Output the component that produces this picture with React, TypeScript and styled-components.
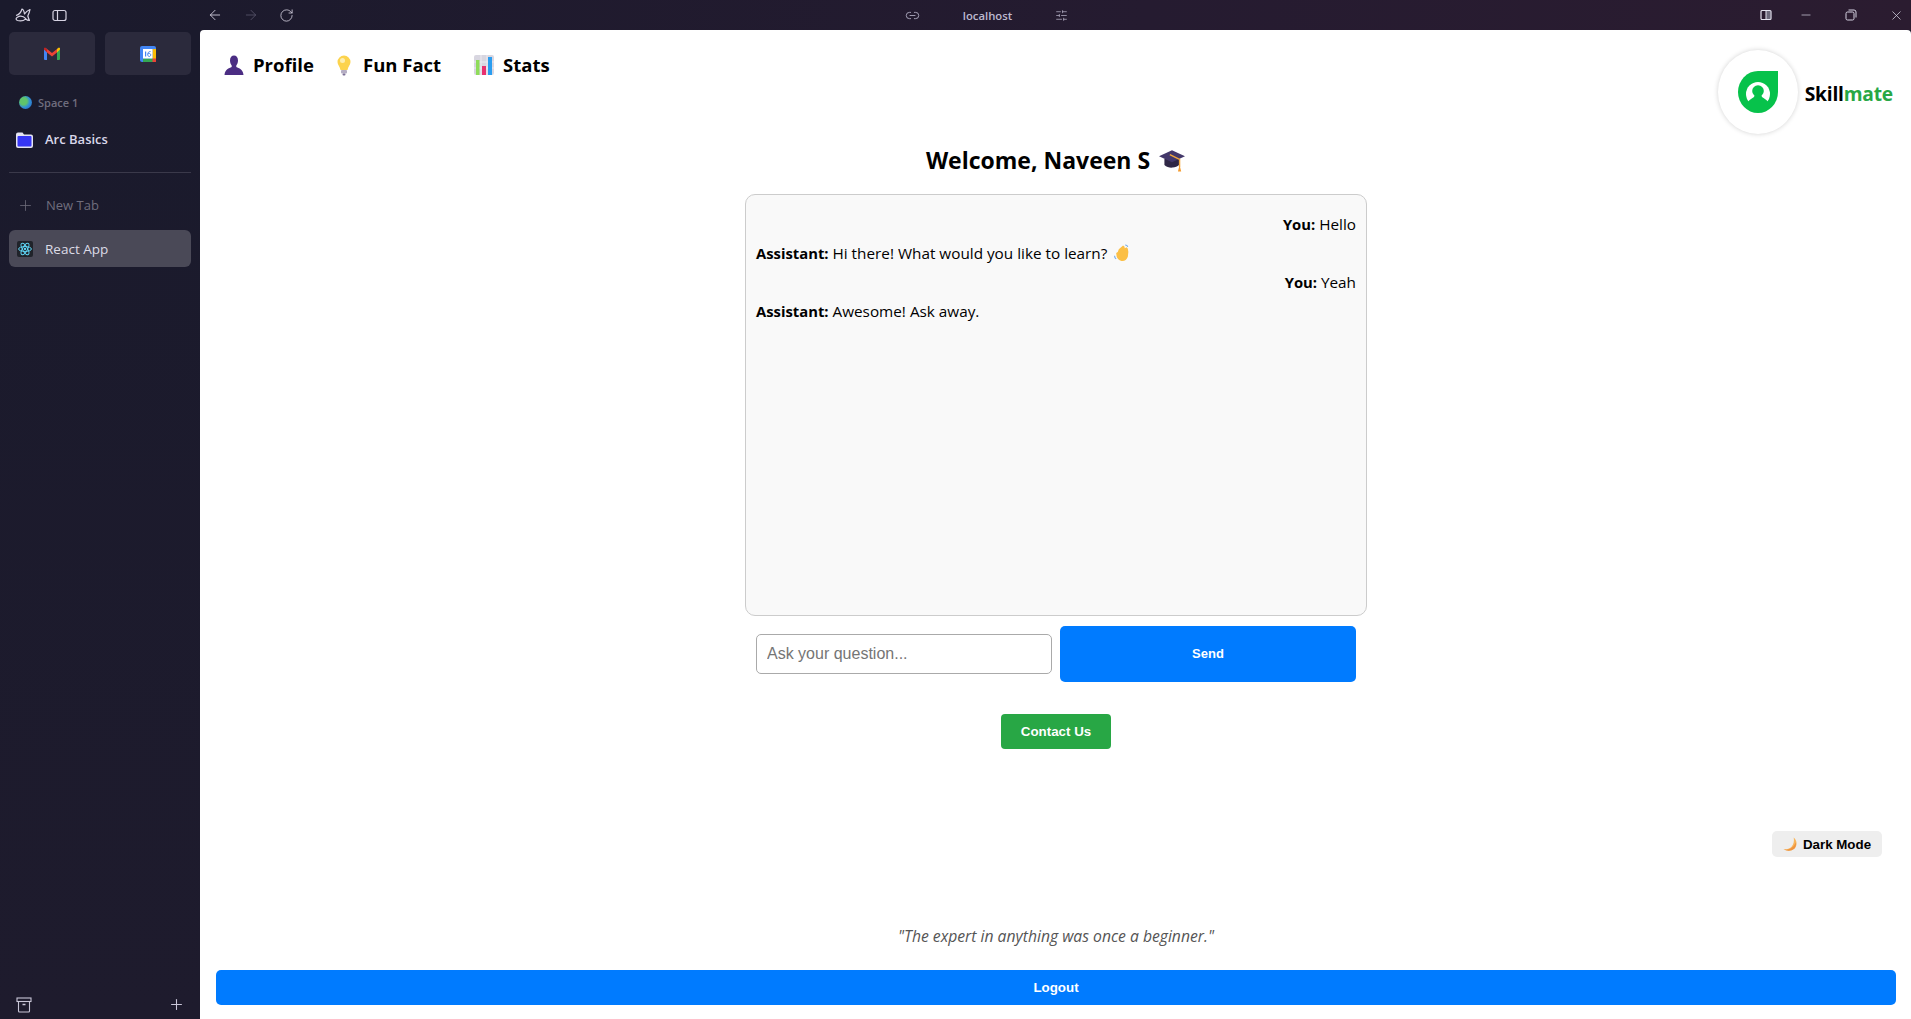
import React from 'react';
import styled, { createGlobalStyle } from 'styled-components';
import { ArrowLeft, ArrowRight, RotateCw, Link2, SlidersHorizontal, Minus, X, Plus } from 'lucide-react';

const UI_FONT = `"Open Sans", "Noto Sans", sans-serif`;

const GlobalStyle = createGlobalStyle`
  html, body {
    margin: 0;
    height: 100%;
    overflow: hidden;
    background: #1b1a2c;
  }
  * {
    box-sizing: border-box;
  }
`;

const Shell = styled.div`
  display: flex;
  flex-direction: column;
  width: 1911px;
  height: 1019px;
`;

const TitleBar = styled.header`
  display: grid;
  grid-template-columns: 1fr auto 1fr;
  align-items: center;
  height: 30px;
  padding: 0 0 0 14px;
  background: linear-gradient(90deg, #1a1a2c 0%, #251b30 60%, #2b1c30 100%);
  color: #d6d3e2;
`;

const BarLeft = styled.div`
  display: flex;
  align-items: center;
`;

const BarIcon = styled.span<{ $dim?: boolean; $gap?: number }>`
  display: flex;
  margin-right: ${(p) => p.$gap ?? 0}px;
  color: ${(p) => (p.$dim ? '#57536a' : '#d6d3e2')};
`;

const Address = styled.div`
  display: flex;
  align-items: center;
  gap: 43px;
  padding-left: 48px;
  font: 600 11.3px ${UI_FONT};
  color: #bdb9cf;
`;

const BarRight = styled.div`
  display: flex;
  align-items: center;
  justify-content: flex-end;
  padding-right: 7px;
`;

const Body = styled.div`
  display: flex;
  flex: 1;
  min-height: 0;
`;

const Sidebar = styled.aside`
  display: flex;
  flex-direction: column;
  width: 200px;
  padding: 2px 9px 0;
  background: linear-gradient(180deg, #1a1a2c 0%, #1e1b2d 100%);
  font-family: ${UI_FONT};
`;

const Pins = styled.div`
  display: grid;
  grid-template-columns: 86px 86px;
  gap: 10px;
`;

const Pin = styled.div`
  display: flex;
  align-items: center;
  justify-content: center;
  height: 43px;
  border-radius: 5px;
  background: #2b2a3c;
`;

const SpaceLabel = styled.div`
  display: flex;
  align-items: center;
  gap: 6px;
  margin: 19px 0 0 10px;
  height: 16px;
  font-size: 11px;
  font-weight: 600;
  color: #6f6d7e;
`;

const Globe = styled.span`
  width: 13px;
  height: 13px;
  border-radius: 50%;
  background: radial-gradient(circle at 35% 40%, #5fc46b 0 30%, #2f8fd8 55%, #2e5fb8 100%);
`;

const FolderRow = styled.div`
  display: flex;
  align-items: center;
  gap: 12px;
  height: 20px;
  margin: 19px 0 0 7px;
  font-size: 13px;
  font-weight: 600;
  color: #d9d7ea;
`;

const Divider = styled.hr`
  width: 100%;
  height: 1px;
  margin: 23px 0 0;
  border: 0;
  background: #3a394a;
`;

const NewTab = styled.div`
  display: flex;
  align-items: center;
  gap: 12px;
  height: 20px;
  margin: 22px 0 0 8px;
  font-size: 13px;
  color: #6f6d7c;
`;

const ActiveTab = styled.div`
  display: flex;
  align-items: center;
  gap: 12px;
  height: 37px;
  margin-top: 15px;
  padding-left: 8px;
  border-radius: 6px;
  background: #4a4957;
  font-size: 13.5px;
  color: #dcdbe6;
`;

const ReactBadge = styled.span`
  display: flex;
  align-items: center;
  justify-content: center;
  width: 16px;
  height: 16px;
  border-radius: 2px;
  background: #20232a;
`;

const SidebarFoot = styled.div`
  display: flex;
  align-items: center;
  justify-content: space-between;
  margin-top: auto;
  padding: 0 6px 6px 7px;
  color: #c9c6d8;
`;

const Main = styled.main`
  display: flex;
  flex: 1;
  flex-direction: column;
  align-items: center;
  min-width: 0;
  padding: 15px 15px 14px 16px;
  border-radius: 4px 4px 0 0;
  background: #fff;
  font-family: ${UI_FONT};
  color: #000;
`;

const TopRow = styled.div`
  display: flex;
  align-items: flex-start;
  justify-content: space-between;
  width: 100%;
  height: 89px;
`;

const Nav = styled.nav`
  display: flex;
  align-items: center;
  padding: 6px 0 0 8px;
`;

const NavItem = styled.a<{ $width: number }>`
  display: flex;
  align-items: center;
  gap: 9px;
  width: ${(p) => p.$width}px;
  font-size: 18.5px;
  font-weight: 700;
  line-height: 28px;
`;

const Brand = styled.div`
  display: flex;
  align-items: center;
  gap: 7px;
  margin: 5px 3px 0 0;
`;

const LogoCircle = styled.div`
  display: flex;
  align-items: center;
  justify-content: center;
  width: 80px;
  height: 84px;
  border-radius: 50%;
  background: #fff;
  box-shadow: 0 0 5px rgba(0, 0, 0, 0.18);
`;

const BrandName = styled.span`
  padding-top: 3px;
  font-size: 19.2px;
  font-weight: 700;
  letter-spacing: -0.2px;
`;

const BrandAccent = styled.span`
  color: #28a745;
`;

const Heading = styled.h2`
  display: flex;
  align-items: center;
  gap: 9px;
  margin: 10px 0 0;
  padding-right: 1px;
  font-size: 23px;
  font-weight: 700;
  line-height: 32px;
`;

const Panel = styled.section`
  display: flex;
  flex-direction: column;
  width: 622px;
  height: 422px;
  margin-top: 18px;
  padding: 15px 10px;
  border: 1px solid #ccc;
  border-radius: 10px;
  background: #f9f9f9;
  font-size: 15.3px;
`;

const Message = styled.div<{ $mine?: boolean }>`
  height: 29px;
  line-height: 29px;
  text-align: ${(p) => (p.$mine ? 'right' : 'left')};

  b {
    font-size: 14.8px;
  }
  svg {
    margin-left: 2px;
    vertical-align: -3px;
  }
`;

const Composer = styled.form`
  display: grid;
  grid-template-columns: 1fr 1fr;
  align-items: center;
  gap: 8px;
  width: 600px;
  margin-top: 10px;
`;

const QuestionInput = styled.input`
  min-width: 0;
  height: 40px;
  padding: 0 10px;
  border: 1px solid #aaa;
  border-radius: 5px;
  font: 16px "Liberation Sans", Arial, sans-serif;
  &::placeholder {
    color: #757575;
  }
`;

const SendButton = styled.button`
  height: 56px;
  padding: 0 0 2px;
  border: 0;
  border-radius: 5px;
  background: #007bff;
  color: #fff;
  font: 700 13px "Liberation Sans", Arial, sans-serif;
`;

const ContactButton = styled.button`
  width: 110px;
  height: 35px;
  margin-top: 32px;
  border: 0;
  border-radius: 4px;
  background: #28a745;
  color: #fff;
  font: 700 13.33px "Liberation Sans", Arial, sans-serif;
`;

const DarkToggle = styled.button`
  display: flex;
  align-items: center;
  justify-content: center;
  gap: 5px;
  align-self: flex-end;
  width: 110px;
  height: 26px;
  margin: 82px 14px 0 0;
  border: 0;
  border-radius: 5px;
  background: #eee;
  color: #000;
  font: 700 13.33px "Liberation Sans", Arial, sans-serif;
`;

const Quote = styled.p`
  margin: auto 0 0;
  font-size: 15.7px;
  font-style: italic;
  color: #555;
`;

const LogoutButton = styled.button`
  flex: none;
  width: 100%;
  height: 35px;
  margin-top: 23px;
  border: 0;
  border-radius: 5px;
  background: #007bff;
  color: #fff;
  font: 700 13.33px "Liberation Sans", Arial, sans-serif;
`;

const ArcMark = () => (
  <svg width="18" height="16" viewBox="0 0 18 16" fill="none" stroke="#d6d3e2" strokeWidth="1.2" strokeLinejoin="round">
    <path d="M2 8.500c2.500-.6 5-3 6-6.500 1 .3 2 1.500 2.500 5 1-1.600 3-3.500 5.500-4.500-.4 2.600-1.500 5-2.200 6.500.4 1.500 1 3 1.600 4.500-1.800 0-3-.8-3.600-1.600-1.800 1.600-5 2.500-8.300 1.600-1.600-.5-1.900-2-.5-3 3-2 6.500-1.200 8.800 1.200" />
  </svg>
);

const PanelIcon = () => (
  <svg width="15" height="13" viewBox="0 0 15 13" fill="none" stroke="#d6d3e2" strokeWidth="1.2">
    <rect x="1" y="1.500" width="13" height="10" rx="2" />
    <path d="M5.500 1.500v10" />
  </svg>
);

const SplitIcon = () => (
  <svg width="12" height="12" viewBox="0 0 12 12">
    <rect x="6" y="2" width="4.500" height="8" fill="#6d6a7c" />
    <rect x="1" y="1.500" width="10" height="9" rx="1" fill="none" stroke="#e4e2ee" strokeWidth="1.200" />
    <path d="M6 1.500v9" stroke="#e4e2ee" strokeWidth="1" />
  </svg>
);

const RestoreIcon = () => (
  <svg width="12" height="12" viewBox="0 0 12 12" fill="none" stroke="#d6d3e2" strokeWidth="1">
    <rect x="1" y="3" width="8" height="8" rx="1.500" />
    <path d="M3.500 1h5.500a2 2 0 0 1 2 2v5.500" />
  </svg>
);

const GmailIcon = () => (
  <svg width="16" height="13" viewBox="0 0 16 13">
    <path d="M0 2.500 1.500 1 3 2v11H1a1 1 0 0 1-1-1z" fill="#4285f4" />
    <path d="M16 2.500 14.500 1 13 2v11h2a1 1 0 0 0 1-1z" fill="#34a853" />
    <path d="M3 2 8 6l5-4v3.500L8 9.500 3 5.500z" fill="#ea4335" />
    <path d="M0 2.500 3 5.500V2L1.800.900A1.100 1.100 0 0 0 0 2z" fill="#c5221f" />
    <path d="M13 2v3.500l3-3V2a1.100 1.100 0 0 0-1.800-1.100z" fill="#fbbc04" />
  </svg>
);

const CalendarIcon = () => (
  <svg width="16" height="16" viewBox="0 0 16 16">
    <rect width="16" height="16" rx="2" fill="#4285f4" />
    <rect x="12.500" y="3" width="3.500" height="10" fill="#fbbc04" />
    <rect x="3" y="12.500" width="10" height="3.500" fill="#34a853" />
    <rect x="12.500" y="12.500" width="3.500" height="3.500" fill="#ea4335" />
    <rect x="3" y="3" width="9.500" height="9.500" fill="#fff" />
    <rect x="5" y="5.500" width="1.200" height="5" fill="#4285f4" />
    <path d="M10.500 5.500c-2 0-2.800 1.400-2.800 3 0 1.200.7 2 1.500 2s1.500-.7 1.500-1.600-.7-1.400-1.500-1.400-1.300.4-1.500.8" fill="none" stroke="#4285f4" strokeWidth="1" />
  </svg>
);

const FolderIcon = () => (
  <svg width="17" height="17" viewBox="0 0 17 17">
    <path d="M2 1.500h4.500l1.500 2h7a2 2 0 0 1 2 2V15a2 2 0 0 1-2 2H2a2 2 0 0 1-2-2V3.500a2 2 0 0 1 2-2z" fill="#e5e4f2" />
    <rect x="1.500" y="5" width="14" height="10.500" rx="1" fill="#3636f5" />
  </svg>
);

const ReactIcon = () => (
  <svg width="14" height="14" viewBox="-12 -12 24 24" fill="none" stroke="#61dafb" strokeWidth="1.600">
    <circle r="2" fill="#61dafb" stroke="none" />
    <ellipse rx="11" ry="4.200" />
    <ellipse rx="11" ry="4.200" transform="rotate(60)" />
    <ellipse rx="11" ry="4.200" transform="rotate(120)" />
  </svg>
);

const ArchiveIcon = () => (
  <svg width="16" height="16" viewBox="0 0 16 16" fill="none" stroke="#c9c6d8" strokeWidth="1.100">
    <rect x="1" y="1" width="14" height="3.500" />
    <path d="M2.500 4.500V14a1 1 0 0 0 1 1h9a1 1 0 0 0 1-1V4.500" />
    <path d="M6.500 7.500h3" strokeWidth="1.500" />
  </svg>
);

const BustIcon = () => (
  <svg width="20" height="20" viewBox="0 0 20 20">
    <path d="M6 5.500C6 2 7.800.500 10 .500s4 1.500 4 5c0 2.300-.9 4-1.700 5v1.500c2.700 1 6.700 2.500 7.200 8H.500c.5-5.500 4.500-7 7.200-8v-1.500C6.900 9.500 6 7.800 6 5.500z" fill="#4b2d83" />
  </svg>
);

const BulbIcon = () => (
  <svg width="20" height="21" viewBox="0 0 20 21">
    <path d="M10 .500a6.500 6.500 0 0 0-6.500 6.500c0 3 2.500 4.500 3 8h7c.5-3.500 3-5 3-8A6.500 6.500 0 0 0 10 .500z" fill="#fcd34d" />
    <circle cx="8.500" cy="5.500" r="2.500" fill="#fdeeb0" />
    <rect x="7" y="15" width="6" height="3.500" rx="1" fill="#b5aec4" />
    <rect x="8.500" y="18.500" width="3" height="2" rx="1" fill="#7c6f95" />
  </svg>
);

const ChartIcon = () => (
  <svg width="20" height="20" viewBox="0 0 20 20">
    <rect width="20" height="20" rx="2" fill="#d8d6e0" />
    <path d="M7 0v20M13 0v20M0 7h20M0 13h20" stroke="#eceaf2" strokeWidth="1" />
    <rect x="2" y="5" width="3.500" height="15" fill="#8fdc5a" />
    <rect x="8" y="11" width="4" height="9" fill="#e8306f" />
    <rect x="14" y="2" width="4" height="18" fill="#2a9df0" />
  </svg>
);

const CapIcon = () => (
  <svg width="26" height="24" viewBox="0 0 24 22">
    <path d="M5 10v5.500c2 2 5 2.800 7.500 2.500s4.500-1.200 6-2.500V10z" fill="#2f2746" />
    <path d="M0 7.500 12 2l12 5.500L12 13z" fill="#43386a" />
    <path d="M10 6l9 4.500v7" fill="none" stroke="#f4a73b" strokeWidth="1.300" />
    <path d="M19 15.500l1.500 6h-3z" fill="#f59b2e" />
  </svg>
);

const WaveIcon = () => (
  <svg width="18" height="18" viewBox="0 0 16 17">
    <path d="M5 5 9 1.500l1.500 1L10.500 4 12.500 3l1 1.500.5 3-.5 4.500c-1 3-3.500 4.500-6 4-2.500-.6-4-2.500-4.500-4L2.500 8.500l1.500-1z" fill="#fbbf45" />
    <path d="M11 1c1 0 2 .5 2.500 1.500M1 11c0 1 .5 2.500 1.500 3" fill="none" stroke="#6aa6e8" strokeWidth="1" />
  </svg>
);

const MoonIcon = () => (
  <svg width="15" height="15" viewBox="0 0 14 14">
    <path d="M10 .500c3.500 3 3.500 8 .5 10.500-2.700 2.300-7 2.300-10 .5 3 .2 5.500-.5 7.500-2.400 2-2 2.600-5.500 2-8.600z" fill="#f8b65c" />
    <path d="M12 5c.5 2.500-.3 4.700-1.500 6-2.700 2.300-7 2.300-10 .5 5 1.500 9.500-1.500 11.500-6.500z" fill="#ef9440" />
  </svg>
);

const LogoMark = () => (
  <svg width="40" height="42" viewBox="0 0 40 42">
    <path d="M20 0H40V21A20 21 0 1 1 20 0z" fill="#07c24b" />
    <circle cx="20" cy="23" r="12" fill="#fff" />
    <circle cx="20" cy="20" r="5.800" fill="#07c24b" />
    <path d="M17 23 16 26C13 28 10 30 8.500 32.500L12 40H28L31.500 32.500C30 30 27 28 24 26L23 23z" fill="#07c24b" />
  </svg>
);

const App = () => (
  <Shell>
    <GlobalStyle />
    <TitleBar>
      <BarLeft>
        <BarIcon $gap={20}>
          <ArcMark />
        </BarIcon>
        <BarIcon $gap={140}>
          <PanelIcon />
        </BarIcon>
        <BarIcon $gap={20}>
          <ArrowLeft size={16} strokeWidth={1.300} />
        </BarIcon>
        <BarIcon $dim $gap={20}>
          <ArrowRight size={16} strokeWidth={1.300} />
        </BarIcon>
        <BarIcon>
          <RotateCw size={15} strokeWidth={1.300} />
        </BarIcon>
      </BarLeft>
      <Address>
        <Link2 size={15} strokeWidth={1.300} />
        <span>localhost</span>
        <SlidersHorizontal size={13} strokeWidth={1.300} />
      </Address>
      <BarRight>
        <BarIcon $gap={27}>
          <SplitIcon />
        </BarIcon>
        <BarIcon $gap={32}>
          <Minus size={14} strokeWidth={1.200} />
        </BarIcon>
        <BarIcon $gap={32}>
          <RestoreIcon />
        </BarIcon>
        <BarIcon>
          <X size={15} strokeWidth={1.200} />
        </BarIcon>
      </BarRight>
    </TitleBar>
    <Body>
      <Sidebar>
        <Pins>
          <Pin>
            <GmailIcon />
          </Pin>
          <Pin>
            <CalendarIcon />
          </Pin>
        </Pins>
        <SpaceLabel>
          <Globe />
          Space 1
        </SpaceLabel>
        <FolderRow>
          <FolderIcon />
          Arc Basics
        </FolderRow>
        <Divider />
        <NewTab>
          <Plus size={17} strokeWidth={1.100} />
          New Tab
        </NewTab>
        <ActiveTab>
          <ReactBadge>
            <ReactIcon />
          </ReactBadge>
          React App
        </ActiveTab>
        <SidebarFoot>
          <ArchiveIcon />
          <Plus size={17} strokeWidth={1.500} />
        </SidebarFoot>
      </Sidebar>
      <Main>
        <TopRow>
          <Nav>
            <NavItem $width={110}>
              <BustIcon />
              Profile
            </NavItem>
            <NavItem $width={140}>
              <BulbIcon />
              Fun Fact
            </NavItem>
            <NavItem $width={100}>
              <ChartIcon />
              Stats
            </NavItem>
          </Nav>
          <Brand>
            <LogoCircle>
              <LogoMark />
            </LogoCircle>
            <BrandName>
              Skill<BrandAccent>mate</BrandAccent>
            </BrandName>
          </Brand>
        </TopRow>
        <Heading>
          Welcome, Naveen S
          <CapIcon />
        </Heading>
        <Panel>
          <Message $mine>
            <b>You:</b> Hello
          </Message>
          <Message>
            <b>Assistant:</b> Hi there! What would you like to learn? <WaveIcon />
          </Message>
          <Message $mine>
            <b>You:</b> Yeah
          </Message>
          <Message>
            <b>Assistant:</b> Awesome! Ask away.
          </Message>
        </Panel>
        <Composer>
          <QuestionInput placeholder="Ask your question..." />
          <SendButton type="button">Send</SendButton>
        </Composer>
        <ContactButton>Contact Us</ContactButton>
        <DarkToggle>
          <MoonIcon />
          Dark Mode
        </DarkToggle>
        <Quote>"The expert in anything was once a beginner."</Quote>
        <LogoutButton>Logout</LogoutButton>
      </Main>
    </Body>
  </Shell>
);

export default App;
